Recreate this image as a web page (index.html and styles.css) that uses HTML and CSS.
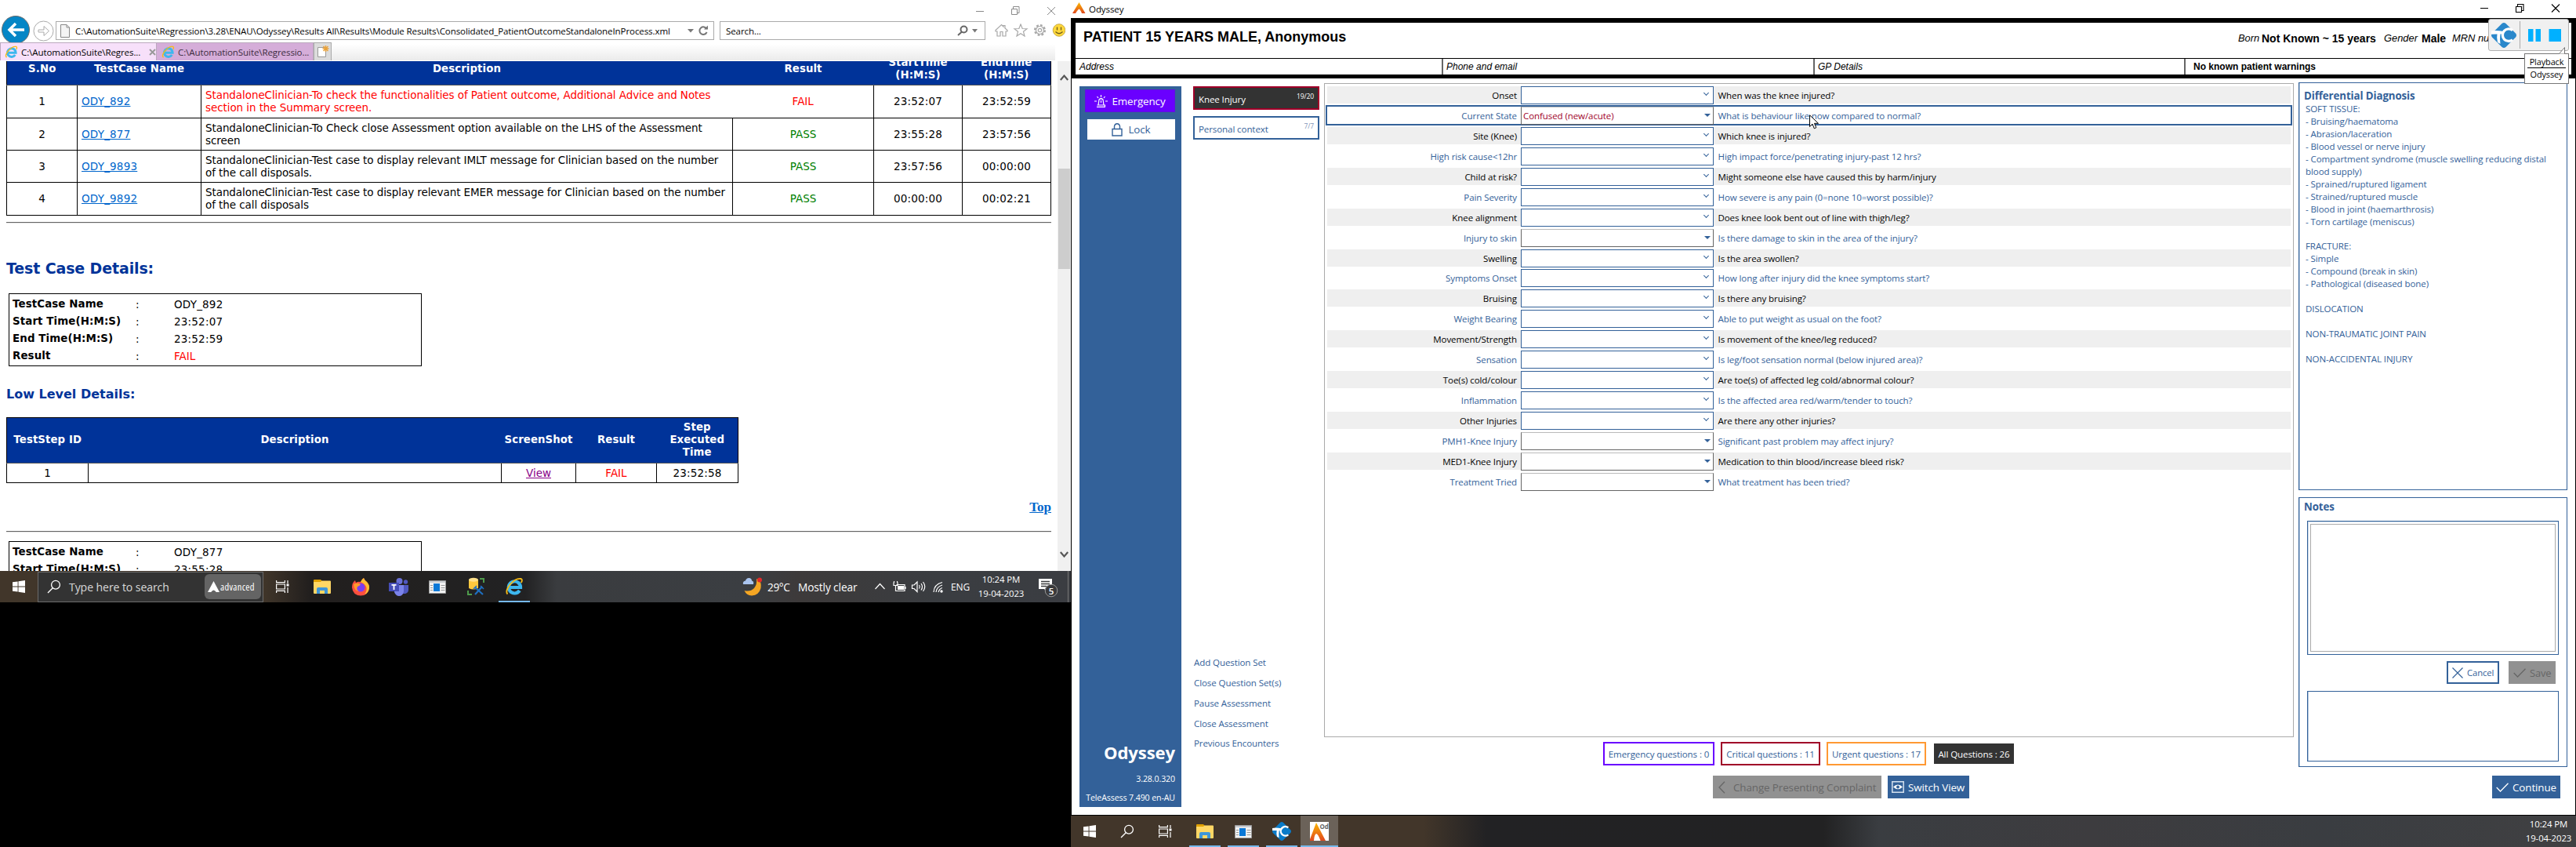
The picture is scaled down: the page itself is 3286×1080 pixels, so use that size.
FILE: index.html
```
<!DOCTYPE html>
<html lang="en">
<head>
<meta charset="utf-8">
<title>Regression run</title>
<link rel="stylesheet" href="styles.css">
</head>
<body>
<svg class="defs" aria-hidden="true">
  <symbol id="win" viewBox="0 0 16 16"><path fill="#fff" d="M0 2.3 6.6 1.4V7.6H0zM7.5 1.3 16 0V7.6H7.5zM0 8.4H6.6V14.6L0 13.7zM7.5 8.4H16V16L7.5 14.8z"/></symbol>
  <symbol id="find" viewBox="0 0 18 18"><g fill="none" stroke="#fff" stroke-width="1.3"><circle cx="11" cy="6.7" r="5.4"/><path d="M7.2 10.7 1 17"/></g></symbol>
  <symbol id="tasks" viewBox="0 0 17 16"><path fill="none" stroke="#fff" stroke-width="1.2" d="M.6 0V2.6H11.400V0M.6 16V13.400H11.400V16M.6 5H11.400V11H.6zM15 0V4M15 9V16"/><path fill="#fff" d="M13.500 4.500h3v3h-3z"/></symbol>
  <symbol id="folder" viewBox="0 0 22 18"><path fill="#e0a100" d="M0 1Q0 0 1 0H9L11 2V6H0z"/><path fill="#ffd765" d="M0 3H9L10.500 1.500H21Q22 1.500 22 2.500V17Q22 18 21 18H1Q0 18 0 17z"/><path fill="#3f96d8" d="M4 18V12Q4 10 6 10H16Q18 10 18 12V18H14V14H8V18z"/></symbol>
  <symbol id="appwin" viewBox="0 0 22 17"><path fill="#f2f2f2" stroke="#9a9a9a" d="M.5.5h21v16h-21z"/><path fill="#c9ccd0" d="M1 1h20v2H1z"/><path fill="#0a78d7" d="M6 4h8v10H6z"/><path stroke="#999" d="M2 6.500h3M2 9.500h3M2 12.500h3M15.500 6.500h5M15.500 9.500h5M15.500 12.500h5"/></symbol>
  <symbol id="tc" viewBox="0 0 32 32"><path fill="currentColor" d="M13.500 1Q16 -1 18.500 1L31 13.500Q33 16 31 18.500L18.500 31Q16 33 13.500 31L1 18.500Q-1 16 1 13.500z"/><path fill="#fff" d="M0 10.500Q7 9.500 15 11V14.500H11.500Q10.500 21 11.500 27L8 25Q6.500 19 7.500 14.500L0 14.800z"/><path fill="none" stroke="#fff" stroke-width="3.300" d="M27 9.600A7.800 7.800 0 1 0 27 21.800"/></symbol>
  <symbol id="ie" viewBox="0 0 24 24"><path fill="none" stroke="#3db7ee" stroke-width="4.200" d="M5.500 13H20A7.600 7.600 0 1 0 18.800 17"/><path fill="none" stroke="#f5bb17" stroke-width="1.900" d="M3.500 21.500C-1.500 17 11 .5 20.500 2 22.500 2.500 22 5 20.800 7"/></symbol>
  <symbol id="check" viewBox="0 0 16 12"><path fill="none" stroke="currentColor" stroke-width="1.300" d="M.7 6 5.500 11 15.500 .7"/></symbol>
</svg>

<section class="screen screen-left">
  <div class="browser">
    <div class="caption">
      <svg class="winctl" width="102" height="12" viewBox="0 0 102 12"><path fill="none" stroke="#8a8a8a" d="M0 6.500H10M45.500 3.500h7v7h-7zM47.500 3V.5h7.500v8H53M91 1 101 11M101 1 91 11"/></svg>
    </div>
    <div class="toolbar">
      <svg class="back" width="36" height="34" viewBox="0 0 36 34"><circle cx="18" cy="18" r="17.500" fill="#0586c6" stroke="#6b6b6b"/><path fill="none" stroke="#fff" stroke-width="3.500" d="M29 18H10M18 10 10 18 18 26"/></svg>
      <svg class="fwd" width="27" height="27" viewBox="0 0 27 27"><circle cx="13.500" cy="13.500" r="12.500" fill="#fff" stroke="#aaa"/><path fill="none" stroke="#aaa" d="M7 12H14V7.500L20.500 13.500 14 19.500V15H7z"/></svg>
      <div class="address">
        <svg width="12" height="17" viewBox="0 0 12 17"><path fill="#f4f4f4" stroke="#888" d="M.5.5H8L11.500 4V16.500H.5zM8 .5V4h3.500"/></svg>
        <span class="url">C:\AutomationSuite\Regression\3.28\ENAU\Odyssey\Results All\Results\Module Results\Consolidated_PatientOutcomeStandaloneInProcess.xml</span>
        <svg width="28" height="14" viewBox="0 0 28 14"><path fill="#777" d="M1 5h8L5 9.500z"/><path fill="none" stroke="#777" stroke-width="2" d="M25.500 5A4.800 4.800 0 1 0 25.600 9"/><path fill="#777" d="M22 5.500h5V.5z"/></svg>
      </div>
      <div class="search">
        <span>Search...</span>
        <svg width="27" height="14" viewBox="0 0 27 14"><g fill="none" stroke="#666" stroke-width="2"><circle cx="8.500" cy="5.500" r="4"/><path d="M6 8.500 1 13"/></g><path fill="#777" d="M19 5h7l-3.500 4.500z"/></svg>
      </div>
      <svg class="tools" width="90" height="17" viewBox="0 0 90 17"><g fill="#fff" stroke="#a8a8a8" stroke-width="1.200"><path d="M1 8.500 8.500 1.500 11 4V2.500h2V6L16 8.500V10H14V16H10V10.500H7V16H3V10H1z"/><path d="M33 1 35.200 6.500 41 6.700 36.500 10.300 38 16 33 12.700 28 16 29.500 10.300 25 6.700 30.800 6.500z"/><circle cx="57.500" cy="8.500" r="6.300" stroke-width="2.500" stroke-dasharray="2.700 2.200"/><circle cx="57.500" cy="8.500" r="5"/><circle cx="57.500" cy="8.500" r="2.200"/></g><circle cx="82" cy="8.500" r="7.800" fill="#ffd83b" stroke="#b99a36" stroke-width=".8"/><path fill="none" stroke="#6b5a1c" stroke-width="1.300" d="M79.500 4.500v4M84.500 4.500v4M77.500 10.500Q82 15 86.500 10.500"/></svg>
    </div>
    <div class="tabs">
      <div class="tab tab-on"><svg width="17" height="17"><use href="#ie"/></svg><span>C:\AutomationSuite\Regres...</span><svg width="9" height="9" viewBox="0 0 9 9"><path stroke="#999" stroke-width="2" d="M1 1 8 8M8 1 1 8"/></svg></div>
      <div class="tab tab-off"><svg width="17" height="17"><use href="#ie"/></svg><span>C:\AutomationSuite\Regressio...</span></div>
      <div class="newtab"><svg width="16" height="16" viewBox="0 0 16 16"><path fill="#fff" stroke="#999" d="M1.500 2.500h10v12h-10z"/><path stroke="#e9a23b" stroke-width="1.500" d="M11.500 0V8M7.500 4h8M8.500 1 14.500 7M14.500 1 8.500 7"/></svg></div>
      <div class="tabfill"></div>
    </div>
    <div class="viewport">
      <main class="report">
        <table class="summary">
          <colgroup><col class="c-no"><col class="c-name"><col class="c-desc"><col class="c-res"><col class="c-time"><col class="c-time"></colgroup>
          <tr class="head"><th>S.No</th><th>TestCase Name</th><th>Description</th><th>Result</th><th>StartTime<br>(H:M:S)</th><th>EndTime<br>(H:M:S)</th></tr>
          <tr class="r42"><td class="mid">1</td><td><a class="link">ODY_892</a></td><td class="desc fail open-r">StandaloneClinician-To check the functionalities of Patient outcome, Additional Advice and Notes<br>section in the Summary screen.</td><td class="mid fail">FAIL</td><td class="mid num">23:52:07</td><td class="mid num">23:52:59</td></tr>
          <tr class="r41"><td class="mid">2</td><td><a class="link">ODY_877</a></td><td class="desc">StandaloneClinician-To Check close Assessment option available on the LHS of the Assessment<br>screen</td><td class="mid pass line-red">PASS</td><td class="mid num">23:55:28</td><td class="mid num">23:57:56</td></tr>
          <tr class="r41"><td class="mid">3</td><td><a class="link">ODY_9893</a></td><td class="desc">StandaloneClinician-Test case to display relevant IMLT message for Clinician based on the number<br>of the call disposals.</td><td class="mid pass line-green">PASS</td><td class="mid num">23:57:56</td><td class="mid num">00:00:00</td></tr>
          <tr class="r42"><td class="mid">4</td><td><a class="link">ODY_9892</a></td><td class="desc">StandaloneClinician-Test case to display relevant EMER message for Clinician based on the number<br>of the call disposals</td><td class="mid pass line-green">PASS</td><td class="mid num">00:00:00</td><td class="mid num">00:02:21</td></tr>
        </table>
        <div class="rule rule-a"></div>
        <h2>Test Case Details:</h2>
        <dl class="case">
          <dt>TestCase Name</dt><dd>:</dd><dd class="num">ODY_892</dd>
          <dt>Start Time(H:M:S)</dt><dd>:</dd><dd class="num">23:52:07</dd>
          <dt>End Time(H:M:S)</dt><dd>:</dd><dd class="num">23:52:59</dd>
          <dt>Result</dt><dd>:</dd><dd class="fail">FAIL</dd>
        </dl>
        <h3>Low Level Details:</h3>
        <table class="steps">
          <colgroup><col class="s-id"><col class="s-desc"><col class="s-shot"><col class="s-res"><col class="s-time"></colgroup>
          <tr class="head"><th>TestStep ID</th><th>Description</th><th>ScreenShot</th><th>Result</th><th>Step<br>Executed<br>Time</th></tr>
          <tr class="r25"><td class="mid">1</td><td></td><td class="mid"><a class="visited">View</a></td><td class="mid fail">FAIL</td><td class="mid num">23:52:58</td></tr>
        </table>
        <div class="toplink"><a>Top</a></div>
        <div class="rule rule-b"></div>
        <dl class="case case-next">
          <dt>TestCase Name</dt><dd>:</dd><dd class="num">ODY_877</dd>
          <dt>Start Time(H:M:S)</dt><dd>:</dd><dd class="num">23:55:28</dd>
        </dl>
      </main>
      <div class="scrollbar">
        <svg width="11" height="8" viewBox="0 0 11 8"><path fill="none" stroke="#555" stroke-width="2.200" d="M.8 7 5.500 1.600 10.200 7"/></svg>
        <div class="thumb"></div>
        <svg class="down" width="11" height="8" viewBox="0 0 11 8"><path fill="none" stroke="#555" stroke-width="2.200" d="M.8 1 5.500 6.400 10.200 1"/></svg>
      </div>
    </div>
  </div>
  <div class="taskbar taskbar-left">
    <div class="tb48"><svg width="16" height="16"><use href="#win"/></svg></div>
    <div class="tbsearch">
      <svg width="18" height="18"><use href="#find"/></svg>
      <span class="ph">Type here to search</span>
      <span class="pill"><svg width="15" height="14" viewBox="0 0 15 14"><path fill="#fff" d="M7.500 0 15 14H10.800Q7.500 9 4.200 14H0z"/></svg>advanced</span>
    </div>
    <div class="tb48 tbview"><svg width="17" height="16"><use href="#tasks"/></svg></div>
    <div class="tb49"><svg width="22" height="18"><use href="#folder"/></svg></div>
    <div class="tb49"><svg width="24" height="24" viewBox="0 0 24 24"><path fill="#ff4f3f" d="M1 13Q1 7 5 4L6 7Q9 5 12 6 14 2 16 1 17 4 20 6 23.500 10 23 14 21.500 23.500 12 23.500 2 23 1 13z"/><path fill="#ffbd33" d="M12 6Q14 2 16 1 17 4 20 6 23.500 10 23 14 22 20 17 22 21 16 19 12 17 8 12 6z"/><circle cx="12" cy="13" r="5.500" fill="#7a3ff0"/><path fill="#ff9a2b" d="M3 9Q8 6 12 9 11 11 8 12 6 16 10 18 4 18 3 9z"/></svg></div>
    <div class="tb49"><svg width="25" height="23" viewBox="0 0 25 23"><circle cx="13.500" cy="4" r="4" fill="#6a71d8"/><circle cx="21.500" cy="5" r="2.700" fill="#5058c0"/><path fill="#5058c0" d="M16 9h9v6q0 4-4 5h-4z"/><path fill="#7b83eb" d="M8 9h11v8q-1 6-6 6-4 0-6-5z"/><path fill="#464eb8" d="M0 6h13v11H0z"/><path stroke="#fff" stroke-width="1.800" d="M3.500 8.900h6M6.500 9v6"/></svg></div>
    <div class="tb49"><svg width="22" height="17"><use href="#appwin"/></svg></div>
    <div class="tb49"><svg width="24" height="24" viewBox="0 0 24 24"><path fill="#ffc83d" d="M3 3h12v11q-6 3-12 0z"/><ellipse cx="9" cy="3.200" rx="6" ry="2.500" fill="#ffe08a"/><path fill="none" stroke="#4e9b4b" stroke-width="2" d="M17 2h5v5M2 17v5h5"/><path stroke="#1f6fc0" stroke-width="2.200" d="M11 22 20 12M11 13 21 22"/><path fill="none" stroke="#1f6fc0" stroke-width="1.600" d="M9 15 13 11M18 11l4 4"/></svg></div>
    <div class="tb49 tb-run"><svg width="24" height="24"><use href="#ie"/></svg></div>
    <div class="weather">
      <svg width="25" height="24" viewBox="0 0 25 24"><path fill="#f5a623" d="M18 2Q25 5 23.500 14 21 23 12 23.500 5 23 2.500 17 10 19 15 14 19 9 18 2z"/><path fill="#a9c4ef" d="M1 9Q0 5 4 4.500 5 .5 9 1 12 1.500 12 4.500 15 5 14 9z"/><circle cx="22" cy="3.500" r="3" fill="#e22b2b"/></svg>
      <span class="deg">29°C</span><span>Mostly clear</span>
    </div>
    <div class="tray">
      <svg width="88" height="16" viewBox="0 0 88 16"><g fill="none" stroke="#fff" stroke-width="1.200"><path d="M.5 11 6.500 4.500 12.500 11M27.500 5.500H38v8H26.500V9M24 2.500v4h5v-4M26.500 6.500V9M24.500 1v2M28.500 1v2M39 8v3M47.500 6v4.500h2.500l4 4V2l-4 4zM56.500 6q1.500 2 0 4.500M59 4q3 4.200 0 8.500M61.500 2q4.500 6 0 12"/><path d="M75 15Q75.500 5 86 2.500M78 15Q79 8 86 6M81 15Q82 11 86 9.500"/></g><path fill="#fff" d="M29 7h8v5h-8z"/><circle cx="85" cy="14" r="1.700" fill="#fff"/></svg>
      <span class="lang">ENG</span>
    </div>
    <div class="clock"><span>10:24 PM</span><span>19-04-2023</span></div>
    <svg class="notif" width="28" height="28" viewBox="0 0 28 28"><path fill="#fff" d="M0 3h17v13h-6v4l-4-4H0z"/><path stroke="#3a3c3f" stroke-width="1.300" d="M3 6.500h11M3 9.500h11M3 12.500h7"/><circle cx="16" cy="18" r="7.800" fill="#3a3a3c" stroke="#999"/><text x="16" y="22.500" text-anchor="middle" class="badge-n">5</text></svg>
    <div class="showdesk"></div>
  </div>
</section>

<section class="screen screen-right">
  <div class="titlebar">
    <svg width="17" height="14" viewBox="0 0 17 14"><defs><linearGradient id="fl" x1="0" y1="0" x2="0" y2="1"><stop offset="0" stop-color="#fbb800"/><stop offset="1" stop-color="#e0481f"/></linearGradient></defs><path fill="url(#fl)" d="M8.500 0 16.500 14H12Q10 9 8.500 8.500 7 9 4 14H0z"/></svg>
    <span>Odyssey</span>
    <svg class="winctl2" width="102" height="11" viewBox="0 0 102 11"><path fill="none" stroke="#000" stroke-width="1.100" d="M0 5.500H10M45.500 3.500h7v7h-7zM47.500 3V.5h7.500v8H53M91 .5 101 10.500M101 .5 91 10.500"/></svg>
  </div>
  <header class="banner">
    <div class="who">
      <span class="patient">PATIENT 15 YEARS MALE, Anonymous</span>
      <div class="facts"><i>Born</i><b>Not Known ~ 15 years</b><i>Gender</i><b>Male</b><i>MRN number</i></div>
    </div>
    <div class="contact"><i>Address</i><i>Phone and email</i><i>GP Details</i><b>No known patient warnings</b></div>
  </header>
  <div class="app">
    <aside class="rail">
      <button class="emerg"><svg width="17" height="16" viewBox="0 0 17 16"><path fill="none" stroke="#fff" stroke-width="1.200" d="M5 13 6 6Q8.500 3.500 11 6L12 13M3 15.300h11M3.500 13h10v2M8.500 0v3M3.500 2 5 4M13.500 2 12 4M0 8h3M14 8h3M8.500 7v3"/></svg>Emergency</button>
      <button class="lock"><svg width="14" height="17" viewBox="0 0 14 17"><path fill="none" stroke="#336199" stroke-width="1.400" d="M1 7.500h12v8.500H1zM3.500 7V4Q4 .8 7 .8T10.500 4V7"/></svg>Lock</button>
      <div class="brand">Odyssey</div>
      <div class="ver">3.28.0.320</div>
      <div class="ver">TeleAssess 7.490 en-AU</div>
    </aside>
    <nav class="sets">
      <div class="set set-on"><span>Knee Injury</span><small>19/20</small></div>
      <div class="set"><span>Personal context</span><small>7/7</small></div>
      <div class="actions"><a>Add Question Set</a><a>Close Question Set(s)</a><a>Pause Assessment</a><a>Close Assessment</a><a>Previous Encounters</a></div>
    </nav>
    <div class="centre">
      <div class="questions">
        <div class="q"><label>Onset</label><div class="combo"></div><p>When was the knee injured?</p></div>
        <div class="q current"><label>Current State</label><div class="combo multi">Confused (new/acute)</div><p>What is behaviour like now compared to normal?</p></div>
        <div class="q"><label>Site (Knee)</label><div class="combo"></div><p>Which knee is injured?</p></div>
        <div class="q"><label>High risk cause&lt;12hr</label><div class="combo"></div><p>High impact force/penetrating injury-past 12 hrs?</p></div>
        <div class="q"><label>Child at risk?</label><div class="combo"></div><p>Might someone else have caused this by harm/injury</p></div>
        <div class="q"><label>Pain Severity</label><div class="combo"></div><p>How severe is any pain (0=none 10=worst possible)?</p></div>
        <div class="q"><label>Knee alignment</label><div class="combo"></div><p>Does knee look bent out of line with thigh/leg?</p></div>
        <div class="q"><label>Injury to skin</label><div class="combo multi"></div><p>Is there damage to skin in the area of the injury?</p></div>
        <div class="q"><label>Swelling</label><div class="combo"></div><p>Is the area swollen?</p></div>
        <div class="q"><label>Symptoms Onset</label><div class="combo"></div><p>How long after injury did the knee symptoms start?</p></div>
        <div class="q"><label>Bruising</label><div class="combo"></div><p>Is there any bruising?</p></div>
        <div class="q"><label>Weight Bearing</label><div class="combo"></div><p>Able to put weight as usual on the foot?</p></div>
        <div class="q"><label>Movement/Strength</label><div class="combo"></div><p>Is movement of the knee/leg reduced?</p></div>
        <div class="q"><label>Sensation</label><div class="combo"></div><p>Is leg/foot sensation normal (below injured area)?</p></div>
        <div class="q"><label>Toe(s) cold/colour</label><div class="combo"></div><p>Are toe(s) of affected leg cold/abnormal colour?</p></div>
        <div class="q"><label>Inflammation</label><div class="combo"></div><p>Is the affected area red/warm/tender to touch?</p></div>
        <div class="q"><label>Other Injuries</label><div class="combo"></div><p>Are there any other injuries?</p></div>
        <div class="q"><label>PMH1-Knee Injury</label><div class="combo multi"></div><p>Significant past problem may affect injury?</p></div>
        <div class="q"><label>MED1-Knee Injury</label><div class="combo multi"></div><p>Medication to thin blood/increase bleed risk?</p></div>
        <div class="q"><label>Treatment Tried</label><div class="combo multi"></div><p>What treatment has been tried?</p></div>
      </div>
      <div class="filters"><span class="f f-em">Emergency questions : 0</span><span class="f f-cr">Critical questions : 11</span><span class="f f-ur">Urgent questions : 17</span><span class="f f-all">All Questions : 26</span></div>
      <div class="flow">
        <button class="btn btn-change"><svg width="9" height="16" viewBox="0 0 9 16"><path fill="none" stroke="#666" stroke-width="1.300" d="M8 .7 1 8 8 15.300"/></svg>Change Presenting Complaint</button>
        <button class="btn btn-switch"><svg width="16" height="15" viewBox="0 0 16 15"><path fill="none" stroke="#d5e1ef" stroke-width="1.500" d="M.8.8h14.400v13.400H.8z"/><path fill="#fff" d="M2 7.500Q8 1.500 14 7.500 8 13 2 7.500z"/><circle cx="8" cy="7.500" r="2" fill="#336199"/></svg>Switch View</button>
      </div>
    </div>
    <aside class="side">
      <div class="card diag">
        <h4>Differential Diagnosis</h4>
        <p>SOFT TISSUE:<br>- Bruising/haematoma<br>- Abrasion/laceration<br>- Blood vessel or nerve injury<br>- Compartment syndrome (muscle swelling reducing distal<br>blood supply)<br>- Sprained/ruptured ligament<br>- Strained/ruptured muscle<br>- Blood in joint (haemarthrosis)<br>- Torn cartilage (meniscus)<br><br>FRACTURE:<br>- Simple<br>- Compound (break in skin)<br>- Pathological (diseased bone)<br><br>DISLOCATION<br><br>NON-TRAUMATIC JOINT PAIN<br><br>NON-ACCIDENTAL INJURY</p>
      </div>
      <div class="card notes">
        <h4>Notes</h4>
        <div class="pad"><div class="pad-in"></div></div>
        <div class="note-btns">
          <button class="btn btn-cancel"><svg width="14" height="14" viewBox="0 0 14 14"><path stroke="#336199" stroke-width="1.200" d="M.5.5 13.500 13.500M13.500.5.5 13.500"/></svg>Cancel</button>
          <button class="btn btn-save"><svg width="16" height="12"><use href="#check"/></svg>Save</button>
        </div>
        <div class="log"></div>
      </div>
      <button class="btn btn-continue"><svg width="16" height="12"><use href="#check"/></svg>Continue</button>
    </aside>
  </div>
  <div class="taskbar taskbar-right">
    <div class="tb48"><svg width="16" height="16"><use href="#win"/></svg></div>
    <div class="tb48"><svg width="18" height="18"><use href="#find"/></svg></div>
    <div class="tb48 tbview"><svg width="17" height="16"><use href="#tasks"/></svg></div>
    <div class="tb49 tb-run"><svg width="22" height="18"><use href="#folder"/></svg></div>
    <div class="tb49 tb-run"><svg width="22" height="17"><use href="#appwin"/></svg></div>
    <div class="tb49 tb-run"><svg class="tc-b" width="24" height="24"><use href="#tc"/></svg></div>
    <div class="tb48 tb-active"><svg width="24" height="24" viewBox="0 0 24 24"><path fill="#fff" d="M0 0h24v24H0z"/><path fill="url(#fl)" d="M8 1 20 24H13.500Q10.500 15.500 8 15 5.500 16 5 24H0V22z"/><text x="12.500" y="8.500" class="od">Od</text></svg></div>
    <div class="clock clock-right"><span>10:24 PM</span><span>19-04-2023</span></div>
  </div>
  <div class="playback">
    <svg class="tc-a" width="32" height="32"><use href="#tc"/></svg>
    <i class="bar"></i>
    <svg width="42" height="16" viewBox="0 0 42 16"><path fill="#00b0ff" d="M0 0h6.500v16H0zM9.500 0H16v16H9.500zM26.500 0H42v16H26.500z"/></svg>
  </div>
  <div class="tip"><svg class="tail" width="9" height="9" viewBox="0 0 9 9"><path fill="#fff" stroke="#777" d="M.5 8.500 7.500.5V8.500"/></svg><span>Playback</span><span>Odyssey</span></div>
  <svg class="cursor" width="13" height="19" viewBox="0 0 13 19"><path fill="#fff" stroke="#000" d="M.5.8V15.500L4 12.200 6.300 17.800 8.800 16.700 6.500 11.300H11.500z"/></svg>
</section>
</body>
</html>
```
FILE: styles.css
```
* { box-sizing: border-box; }
body { margin: 0; width: 3286px; height: 1080px; overflow: hidden; display: flex; background: #000; font-family: "Open Sans", sans-serif; font-size: 11.55px; letter-spacing: -.1px; }
.defs { position: absolute; width: 0; height: 0; }
svg { display: block; flex: none; }
button { font: inherit; letter-spacing: inherit; border: 0; padding: 0; margin: 0; }
h2, h3, h4, p, dl, dd { margin: 0; }
.screen { position: relative; flex: none; height: 1080px; }
.screen-left { width: 1366px; }
.screen-right { width: 1920px; display: flex; flex-direction: column; }

/* browser window */
.browser { height: 728px; background: #fff; overflow: hidden; display: flex; flex-direction: column; }
.caption { height: 27px; display: flex; justify-content: flex-end; padding: 8px 19px 0 0; flex: none; }
.toolbar { height: 27px; display: flex; align-items: flex-start; flex: none; padding-left: 2px; }
.back { margin-top: -7px; }
.fwd { margin: -1px 2px 0 4px; }
.address { width: 840px; height: 24px; border: 1px solid #aaa; display: flex; align-items: center; padding: 0 6px 0 5px; flex: none; }
.url { margin-left: 7px; flex: 1 1 0; min-width: 0; white-space: nowrap; }
.search { width: 339px; height: 24px; margin-left: 7px; border: 1px solid #aaa; display: flex; align-items: center; justify-content: space-between; padding: 0 8px 0 7px; flex: none; }
.tools { margin: 3px 0 0 12px; }
.tabs { height: 24px; display: flex; flex: none; border-bottom: 1px solid #fff; }
.tab { width: 200px; border: 1px solid #bba9be; border-bottom: 0; display: flex; align-items: center; gap: 4px; padding-left: 5px; white-space: nowrap; }
.tab-on { background: #f7e0fa; }
.tab-on span { width: 159px; }
.tab-off { background: #d5add9; color: #3c2c40; border-left: 0; padding-left: 6px; }
.newtab { width: 23px; background: #dcdcdc; border: 1px solid #aaa; border-bottom: 0; display: flex; align-items: center; justify-content: center; }
.tabfill { flex: 1; background: linear-gradient(#fff 10%, #ebebeb); margin-right: 20px; }
.viewport { height: 650px; display: flex; }
.report { flex: 1; height: 650px; overflow: hidden; padding-left: 8px; font: 13.5px/16px "DejaVu Sans", sans-serif; letter-spacing: 0; }
.scrollbar { width: 17px; background: #f0f0f0; display: flex; flex-direction: column; align-items: center; padding-top: 17px; }
.scrollbar .thumb { width: 15px; height: 128px; background: #cdcdcd; margin-top: 112px; }
.scrollbar .down { margin-top: 360px; }

table { border-collapse: collapse; table-layout: fixed; }
td, th { padding: 0 5px; border: 1px solid #000; }
.head th { background: #039; color: #fff; font-size: 13.3px; letter-spacing: .1px; border: 0; border-bottom: 1px solid #555; }
.head th:first-child { border-left: 1px solid #000; }
.head th:last-child { border-right: 1px solid #000; }
.mid { text-align: center; }
.fail { color: #f00; }
.pass { color: #008000; }
.num, .link { letter-spacing: .2px; }
.link { color: #06c; text-decoration: underline; }
.visited { color: #808; text-decoration: underline; }
.summary { width: 1333px; margin-top: -9px; }
.summary .head { height: 39px; }
.summary .desc { letter-spacing: -.08px; white-space: nowrap; }
.open-r { border-right-style: none; }
.open-r + td { border-left-style: none; }
.line-red { border-top-color: #d03030; }
.line-green { border-top-color: #3a863a; }
.r42 { height: 42px; } .r41 { height: 41px; } .r25 { height: 25px; }
.c-no { width: 90px; } .c-name { width: 158px; } .c-desc { width: 678px; } .c-res { width: 180px; } .c-time { width: 113px; }
.rule { width: 1333px; height: 2px; background: #666; border-bottom: 1px solid #e4e4e4; }
.rule-a { margin-top: 8px; }
h2 { margin-top: 45px; height: 24px; font-size: 19px; line-height: 24px; color: #039; letter-spacing: -.13px; }
.case { margin: 20px 0 0 3px; width: 527px; height: 93px; border: 1px solid #000; padding: 2px 0 0 4px; display: grid; grid-template-columns: 157px 49px 1fr; grid-auto-rows: 22px; align-items: center; }
.case dt { font-weight: 700; font-size: 13.4px; letter-spacing: .1px; white-space: nowrap; }
h3 { margin-top: 26px; height: 20px; font-size: 16px; line-height: 20px; color: #039; }
.steps { width: 933px; margin-top: 19px; }
.steps .head { height: 58px; }
.steps .head th { border-top: 1px solid #000; padding: 0; }
.s-id { width: 104px; } .s-desc { width: 527px; } .s-shot { width: 95px; } .s-res { width: 103px; } .s-time { width: 104px; }
.toplink { width: 1333px; margin-top: 21px; height: 20px; text-align: right; font: 700 17px/20px "Liberation Serif", serif; color: #06c; text-decoration: underline; }
.rule-b { margin-top: 20px; }
.case-next { margin-top: 11px; height: 94px; align-content: start; }

/* taskbars */
.taskbar { height: 40px; display: flex; align-items: center; color: #fff; flex: none; }
.taskbar-left { background: linear-gradient(90deg, #41362a 0, #41362a 335px, #221f1e 395px, #222223 670px, #3a3c3f 710px, #3b3e42 950px, #3d3a3a 1020px, #3a3d41 1200px, #3b3d42); }
.taskbar-right { background: linear-gradient(90deg, #42362a 0, #42362a 450px, #222224 530px, #222223 960px, #3a3d41 1030px, #3d3c3f 1300px, #3a3d41 1600px, #404042); }
.tb48, .tb49 { width: 48px; height: 40px; display: flex; align-items: center; justify-content: center; flex: none; }
.tb49 { width: 49px; }
.tbview { margin-right: 2px; }
.tb-run { background: linear-gradient(#76b9ed, #76b9ed) center bottom / 40px 2px no-repeat; }
.tb-active { background: #6b6259; border-bottom: 2px solid #76b9ed; padding-top: 2px; }
.tc-b { color: #0a7bc8; }
.tc-a { color: #2a88cb; }
.od { font: 700 8px "Open Sans", sans-serif; fill: #666; }
.tbsearch { width: 288px; height: 39px; background: #333; border: 1px solid #6b6b6b; display: flex; align-items: center; padding-left: 11px; }
.ph { margin-left: 10px; width: 173px; font-size: 14.1px; color: #d8d8d8; white-space: nowrap; }
.pill { width: 72px; height: 32px; border-radius: 6px; background: #646464; display: flex; align-items: center; padding-left: 4px; gap: 1px; font-size: 12.5px; font-stretch: 75%; letter-spacing: .3px; }
.weather { display: flex; align-items: center; margin-left: auto; font-size: 13.7px; white-space: nowrap; width: 169px; }
.deg { margin: 0 9px 0 7px; width: 30px; letter-spacing: -.4px; }
.tray { display: flex; align-items: center; width: 132px; }
.lang { margin-left: 9px; font-size: 12px; }
.clock { width: 58px; display: flex; flex-direction: column; align-items: center; line-height: 18px; font-size: 11.4px; white-space: nowrap; }
.notif { margin: 2px 0 0 19px; }
.badge-n { font: 600 11.5px "Open Sans", sans-serif; fill: #fff; }
.showdesk { width: 1px; height: 40px; background: #777; margin: 0 3px 0 9px; }
.clock-right { margin: 0 6px 0 auto; }

/* patient application */
.titlebar { height: 23px; background: #fff; display: flex; align-items: flex-start; padding: 3px 20px 0 2px; flex: none; }
.titlebar span { margin: 1px 0 0 4px; line-height: 16px; }
.winctl2 { margin: 2px 0 0 auto; }
.banner { height: 77px; border: solid #000; border-width: 6px 6px 5px; background: #fff; color: #000; font-family: "Liberation Sans", sans-serif; letter-spacing: 0; flex: none; }
.who { height: 46px; border-bottom: 1px solid #000; display: flex; align-items: baseline; justify-content: space-between; padding: 7px 0 0 10px; white-space: nowrap; overflow: hidden; }
.patient { font-weight: 700; font-size: 18px; line-height: 22px; }
.facts { width: 425px; display: grid; grid-template-columns: 30px 156px 48px 39px 1fr; font-size: 14px; line-height: 22px; }
.facts i { font-size: 12.9px; }
.facts b { font-size: 14px; }
.contact { height: 20px; display: grid; grid-template-columns: 467px 474px 473px 1fr; line-height: 20px; font-size: 12px; }
.contact > * + * { border-left: 2px solid #666; }
.contact i { padding-left: 4px; }
.contact i:first-child { padding-left: 5px; }
.contact b { padding-left: 10px; }
.app { height: 940px; background: #fff; border: 1px solid #000; border-top: 0; display: flex; align-items: flex-start; color: #336199; flex: none; }
.rail { width: 130px; height: 919px; margin: 10px 0 0 10px; background: #336199; color: #fff; display: flex; flex-direction: column; align-items: flex-end; padding: 4px 8px 0 0; }
.rail button { display: flex; align-items: center; justify-content: center; font-size: 13.4px; }
.emerg { width: 115px; height: 29px; background: #6a00ff; color: #fff; border: 1px solid #5f10e0; gap: 5px; }
.lock { width: 112px; height: 26px; margin-top: 9px; background: #fff; color: #336199; gap: 7px; }
.brand { margin-top: auto; font-weight: 700; font-size: 22.1px; line-height: 30px; margin-bottom: 7px; }
.ver { font-size: 10.6px; line-height: 24px; white-space: nowrap; }
.sets { width: 161px; height: 860px; margin: 10px 0 0 15px; display: flex; flex-direction: column; }
.set { height: 30px; border: 2px solid #336199; display: flex; justify-content: space-between; padding: 0 5px; margin-bottom: 8px; line-height: 29px; white-space: nowrap; }
.set-on { background: #333; border-color: #a00028; color: #fff; }
.set small { font-size: 8.5px; line-height: 21px; }
.set:not(.set-on) small { color: #7f95b8; }
.actions { margin-top: auto; display: flex; flex-direction: column; padding: 0 0 9px 1px; line-height: 25.75px; }
.centre { width: 1237px; margin: 6px 0 0 6px; }
.questions { height: 834px; border: 1px solid #aaa; padding: 3px; display: grid; grid-template-columns: 1fr; grid-auto-rows: 25.95px; align-content: start; }
.q { height: 22px; display: grid; grid-template-columns: 247px 246px 1fr; line-height: 23px; white-space: nowrap; }
.q:nth-child(odd) { background: #efefef; color: #000; }
.q label { text-align: right; padding-right: 5px; }
.q p { padding-left: 5.500px; }
.q.current { outline: 2px solid #336199; }
.combo { background: #fff; border: 1px solid #336199; padding-left: 2px; color: #a00028; line-height: 21px; position: relative; }
.combo::after { content: ""; position: absolute; right: 6px; top: 5px; width: 4px; height: 4px; border: solid #336199; border-width: 0 1.500px 1.500px 0; transform: rotate(45deg); }
.combo.multi { border-color: #bbb #666 #666; }
.combo.multi::after { border: solid transparent; border-width: 4px 4px 0; border-top-color: #336199; width: 0; height: 0; right: 3px; top: 8px; transform: none; }
.filters { display: flex; gap: 8px; margin: 6px 0 0 356px; }
.f { height: 30px; border: 2px solid; line-height: 27px; text-align: center; white-space: nowrap; }
.f-em { width: 142px; border-color: #6a00ff; }
.f-cr { width: 127px; border-color: #a00028; }
.f-ur { width: 127px; border-color: #ff9933; }
.f-all { width: 102px; height: 26px; margin: 2px 0 0 2px; border: 0; background: #333; color: #fff; }
.flow { display: flex; gap: 8px; margin: 13px 0 0 496px; }
.btn { height: 29px; display: flex; align-items: center; font-size: 13.4px; white-space: nowrap; }
.btn-change { width: 215px; background: #919191; color: #666; padding-left: 7px; gap: 10px; }
.btn-switch { width: 104px; background: #336199; color: #fff; padding-left: 5px; gap: 5px; }
.side { width: 343px; margin: 5px 0 0 6px; }
.card { border: 1px solid #336199; box-shadow: inset 1px 0 #b5c8de; }
.card h4 { font-size: 13.3px; line-height: 20px; height: 20px; padding-left: 6px; }
.diag { height: 520px; padding-top: 6px; }
.diag p { line-height: 15.96px; padding: 0 0 0 8px; margin-top: -1px; white-space: nowrap; }
.notes { height: 344px; margin-top: 9px; padding-top: 1px; }
.pad { width: 321px; height: 171px; margin: 8px 0 0 10px; border: 1px solid #336199; padding: 3px; box-shadow: inset 1px 1px #cfdcea; }
.pad-in { height: 163px; border: 1px solid #aaa; }
.note-btns { display: flex; gap: 12px; margin: 8px 0 0 188px; }
.btn-cancel { width: 67px; border: 2px solid #336199; background: #fff; color: #336199; font-size: 11.3px; padding-left: 5px; gap: 5px; }
.btn-save { width: 60px; background: #919191; color: #666; font-size: 12.900px; padding-left: 6px; gap: 5px; }
.log { width: 321px; height: 90px; margin: 9px 0 0 10px; border: 1px solid #336199; box-shadow: inset 1px 0 #b5c8de; }
.btn-continue { width: 87px; margin: 11px 0 0 247px; background: #336199; color: #fff; padding-left: 5px; gap: 5px; }

/* playback recorder floating over the banner */
.playback { position: absolute; left: 1808px; top: 24px; width: 103px; height: 41px; background: #f0f0f0; border: 1px solid #b0b0b0; border-radius: 3px; display: flex; align-items: center; padding-left: 3px; }
.playback .bar { width: 1px; height: 35px; background: #aaa; margin: 0 10px 0 4px; }
.tip { position: absolute; left: 1854px; top: 68px; width: 57px; height: 39px; background: #fff; border: 1px solid #777; padding: 2px 3px 0; text-align: center; color: #000; font-size: 10.9px; }
.tip span { display: block; line-height: 15px; height: 15px; }
.tip span:first-of-type { border-bottom: 1px solid #000; height: 16px; }
.tail { position: absolute; left: 43px; top: -9px; }
.cursor { position: absolute; left: 942px; top: 146px; }
```
